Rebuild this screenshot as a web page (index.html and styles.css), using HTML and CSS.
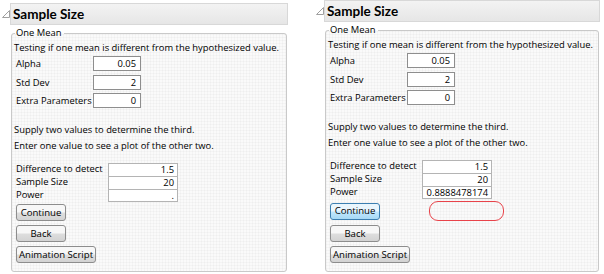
FILE: index.html
```html
<!DOCTYPE html>
<html lang="en">
<head>
  <meta charset="UTF-8">
  <title>Sample Size</title>
  <link rel="stylesheet" href="styles.css">
</head>
<body>
  <div class="page">

    <section class="report report-left">
      <div class="report-head">
        <svg class="disclosure" width="8" height="8" viewBox="0 0 8 8"><path d="M7.5 0.5 L7.5 7.5 L0.5 7.5 Z" fill="#fff" stroke="#a0a0a0"/></svg>
        <h2>Sample Size</h2>
      </div>
      <fieldset class="outline">
        <legend>One Mean</legend>
        <p class="intro">Testing if one mean is different from the hypothesized value.</p>
        <div class="params">
          <span>Alpha</span><span class="box">0.05</span>
          <span>Std Dev</span><span class="box">2</span>
          <span>Extra Parameters</span><span class="box">0</span>
        </div>
        <p class="note">Supply two values to determine the third.<br>Enter one value to see a plot of the other two.</p>
        <div class="values">
          <span>Difference to detect</span><span class="cell">1.5</span>
          <span>Sample Size</span><span class="cell">20</span>
          <span>Power</span><span class="cell">.</span>
        </div>
        <div class="buttons">
          <button class="btn">Continue</button>
          <button class="btn">Back</button>
          <button class="btn">Animation Script</button>
        </div>
      </fieldset>
    </section>

    <section class="report report-right">
      <div class="report-head">
        <svg class="disclosure" width="8" height="8" viewBox="0 0 8 8"><path d="M7.5 0.5 L7.5 7.5 L0.5 7.5 Z" fill="#fff" stroke="#a0a0a0"/></svg>
        <h2>Sample Size</h2>
      </div>
      <fieldset class="outline">
        <legend>One Mean</legend>
        <p class="intro">Testing if one mean is different from the hypothesized value.</p>
        <div class="params">
          <span>Alpha</span><span class="box">0.05</span>
          <span>Std Dev</span><span class="box">2</span>
          <span>Extra Parameters</span><span class="box">0</span>
        </div>
        <p class="note">Supply two values to determine the third.<br>Enter one value to see a plot of the other two.</p>
        <div class="values">
          <span>Difference to detect</span><span class="cell">1.5</span>
          <span>Sample Size</span><span class="cell">20</span>
          <span>Power</span><span class="cell">0.8888478174</span>
        </div>
        <div class="buttons">
          <div class="btn-row">
            <button class="btn focused">Continue</button>
            <span class="callout"></span>
          </div>
          <button class="btn">Back</button>
          <button class="btn">Animation Script</button>
        </div>
      </fieldset>
    </section>

  </div>
</body>
</html>
```

FILE: styles.css
```css
body {
  margin: 0;
  background-color: #fff;
  font-family: "Open Sans", "Noto Sans", sans-serif;
  font-size: 9.4px;
  color: #000;
}

.page {
  display: flex;
  align-items: flex-start;
  gap: 28px;
  padding-left: 2px;
}

.report {
  width: 286px;
  white-space: nowrap;
}

.report-left {
  padding-top: 3px;
}

.report-right {
  width: 284px;
}

.report-head {
  display: flex;
  align-items: center;
}

.disclosure {
  flex: none;
}

.report-head h2 {
  flex: 1;
  margin: 0;
  padding: 0 2px;
  height: 20px;
  line-height: 20px;
  font-family: Lato, sans-serif;
  font-size: 13.5px;
  font-weight: bold;
  color: #000;
  background: linear-gradient(#f3f3f3, #e6e6e6);
  border: 1px solid #d8d8d8;
}

.outline {
  margin: 1px 1px 0 9px;
  padding: 0 4px 8px 2px;
  border: 1px solid #c9c9c9;
  border-radius: 3px;
  background-color: #fafafa;
  background-image:
    linear-gradient(90deg, rgba(0, 0, 0, 0.025) 1px, transparent 1px),
    linear-gradient(rgba(0, 0, 0, 0.025) 1px, transparent 1px);
  background-size: 3px 3px;
}

.outline legend {
  padding: 0 3px 0 1px;
  margin-left: 1px;
  line-height: 14px;
}

.intro {
  margin: 0;
  line-height: 15px;
}

.params {
  display: grid;
  grid-template-columns: 77px 48px;
  grid-auto-rows: 15px;
  row-gap: 3.5px;
  align-items: center;
  margin: 1px 0 0 2px;
}

.box {
  box-sizing: border-box;
  height: 15px;
  line-height: 13px;
  padding: 0 4px;
  text-align: right;
  background: #fff;
  border: 1px solid #8e8e8e;
}

.note {
  margin: 14px 0 0;
  line-height: 16px;
}

.values {
  display: grid;
  grid-template-columns: 92px 70px;
  grid-auto-rows: 13px;
  margin: 9px 0 0 2px;
  line-height: 12px;
}

.cell {
  padding: 0 3px;
  text-align: right;
  background: #fff;
  border: 1px solid #b4b4b4;
  border-bottom: none;
}

.values .cell:last-child {
  border-bottom: 1px solid #b4b4b4;
}

.buttons {
  display: flex;
  flex-direction: column;
  align-items: flex-start;
  gap: 4px;
  margin: 2px 0 0 2px;
}

.btn-row {
  display: flex;
  align-items: center;
  gap: 49px;
}

.btn {
  min-width: 50px;
  height: 17px;
  padding: 0 2px;
  font-family: inherit;
  font-size: 9.6px;
  line-height: 14px;
  color: #000;
  background: linear-gradient(#f7f7f7 45%, #dddddd 55%, #d3d3d3);
  border: 1px solid #8d8d8d;
  border-radius: 3px;
}

.btn.focused {
  background: linear-gradient(#eaf6fd 45%, #bee6fd 55%, #a7d9f5);
  border-color: #3c7fb1;
}

.callout {
  width: 73px;
  height: 18px;
  border: 1px solid #e8434a;
  border-radius: 9px;
}
```
